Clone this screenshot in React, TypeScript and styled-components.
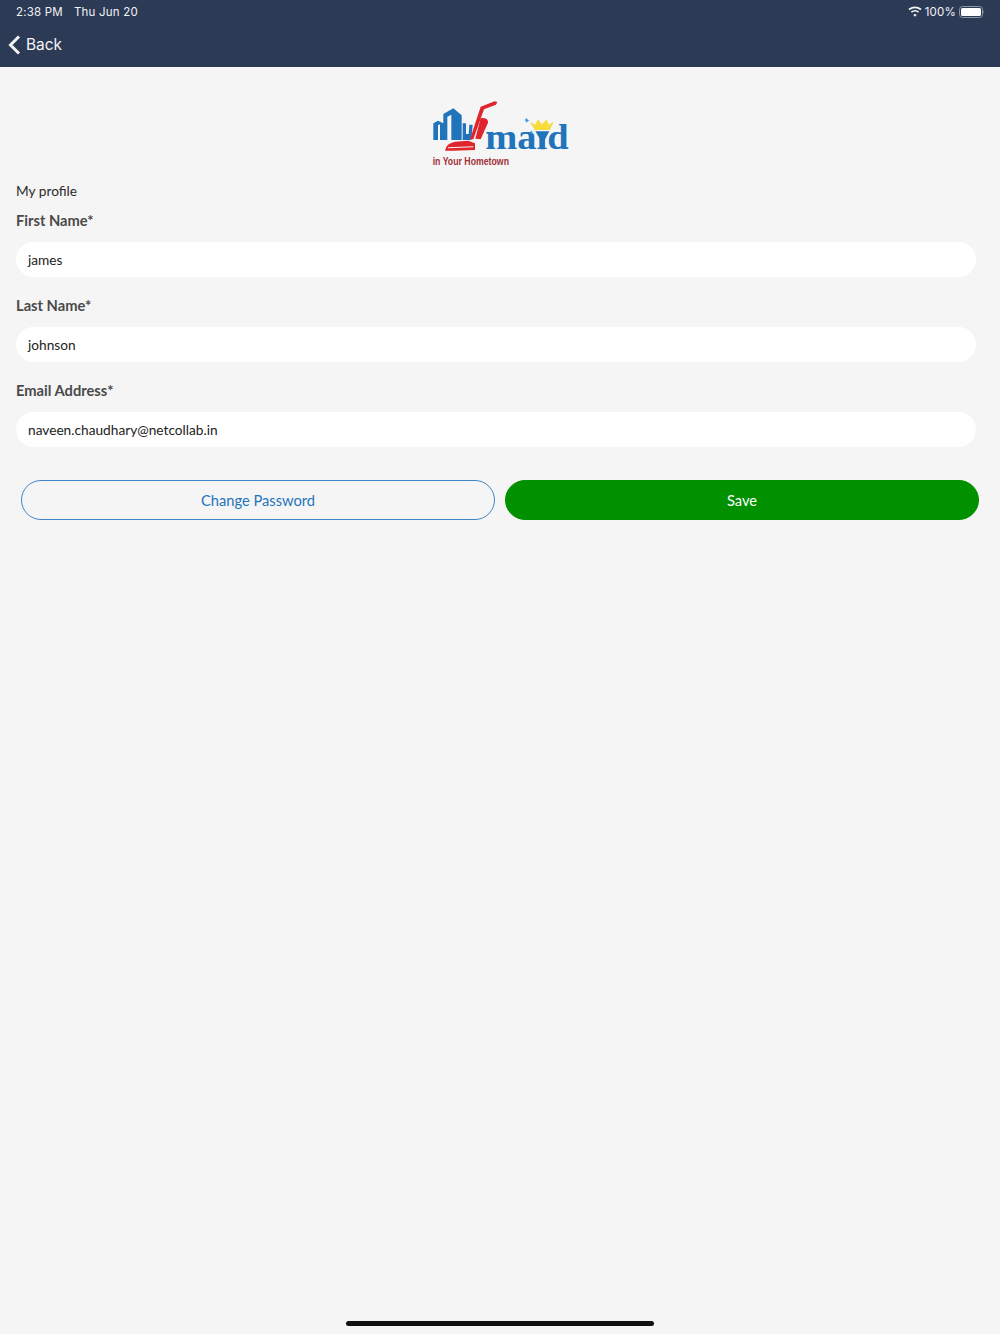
import styled, { createGlobalStyle } from "styled-components"

const GlobalStyle = createGlobalStyle`
  html, body {
    margin: 0;
    padding: 0;
    background: #f5f5f5;
    font-family: Lato, "Liberation Sans", sans-serif;
  }
`

const Page = styled.div`
  min-height: 100vh;
  display: flex;
  flex-direction: column;
  box-sizing: border-box;
`

const Header = styled.header`
  height: 67px;
  background: #2d3a55;
  color: #f2f3f5;
  box-sizing: border-box;
  padding: 0 15px 0 8px;
`

const StatusBar = styled.div`
  height: 23px;
  display: flex;
  align-items: center;
  justify-content: space-between;
  padding-left: 8px;
  font-family: Inter, "Liberation Sans", sans-serif;
  font-size: 11.5px;
  letter-spacing: 0.2px;
`

const StatusGroup = styled.div`
  display: flex;
  align-items: center;
  gap: ${(p: { $gap: number }) => p.$gap}px;
`

const BackLink = styled.div`
  display: flex;
  align-items: center;
  gap: 5px;
  height: 43px;
  font-family: Inter, "Liberation Sans", sans-serif;
  font-size: 15.4px;
`

const LogoWrap = styled.div`
  display: flex;
  justify-content: center;
  padding-top: 23px;
  height: 85px;
`

const Content = styled.main`
  padding: 0 24px 0 16px;
`

const Title = styled.div`
  font-size: 13.7px;
  line-height: 20px;
  color: #2b2b2b;
  margin-top: 6px;
`

const Field = styled.div`
  display: flex;
  flex-direction: column;
  margin-top: ${(p: { $top: number }) => p.$top}px;
`

const Label = styled.label`
  font-size: 14.7px;
  font-weight: 700;
  line-height: 20px;
  color: #4a4a4a;
`

const Input = styled.div`
  height: 35px;
  margin-top: 12px;
  padding: 0 12px;
  display: flex;
  align-items: center;
  background: #fff;
  border-radius: 18px;
  font-size: 13.7px;
  color: #222;
`

const Buttons = styled.div`
  display: flex;
  gap: 10px;
  margin: 33px -3px 0 5px;
`

const Button = styled.button<{ $primary?: boolean }>`
  flex: 1;
  height: 40px;
  box-sizing: border-box;
  border-radius: 21px;
  font-family: inherit;
  font-size: 14.7px;
  padding: 0;
  color: ${(p) => (p.$primary ? "#fff" : "#1f74bb")};
  background: ${(p) => (p.$primary ? "#009000" : "transparent")};
  border: 1px solid ${(p) => (p.$primary ? "#009000" : "#3f86c6")};
`

const HomeIndicator = styled.div`
  width: 308px;
  height: 5px;
  background: #111;
  border-radius: 3px;
  margin: auto auto 8px;
`

const Logo = () => (
  <svg width="180" height="85" viewBox="0 0 540 255">
    {/* towers */}
    <path d="M70 100 L84 92 L100 100 L100 72 L130 55 L155 76 L155 150 L70 150 Z" fill="#1f74bb" />
    <path d="M84 106 L90 103 L90 150 L84 150 Z M112 80 L124 74 L124 150 L112 150 Z" fill="#f5f5f5" />
    <path d="M158 100 L168 100 L168 132 L176 132 L178 104 L188 104 L184 150 L158 150 Z" fill="#1f74bb" />
    {/* vacuum */}
    <path d="M262 36 L258 44 L222 58 L190 148 L180 148 L212 50 L254 34 Z" fill="#e0262c" />
    <path d="M212 84 Q236 82 234 98 L212 148 L196 146 Z" fill="#e0262c" />
    <path d="M105 182 Q108 160 135 155 L175 152 L195 160 L195 180 L130 182 Z" fill="#e0262c" />
    <path d="M114 172 L190 169 L190 172 L114 175 Z" fill="#f5f5f5" />
    {/* wordmark */}
    <text
      x="226"
      y="177"
      fontFamily="'Liberation Serif', serif"
      fontWeight="700"
      fontSize="106"
      fill="#1f74bb"
      textLength="250"
      lengthAdjust="spacingAndGlyphs"
    >
      maıd
    </text>
    <path d="M360 95 L376 104 L384 88 L396 103 L410 88 L416 104 L431 95 L420 120 L374 120 Z" fill="#f7dc3c" />
    <path d="M376 124 L418 124 L404 150 L404 178 L392 178 L392 150 Z" fill="#1f74bb" />
    <path d="M350 84 L354 90 L358 92 L352 95 L349 98 L347 93 L344 90 Z M364 122 L368 126 L364 132 L360 126 Z" fill="#3f9fdc" />
    <text
      x="68"
      y="225"
      fontFamily="'Liberation Sans', sans-serif"
      fontWeight="700"
      fontSize="33"
      fill="#a2303a"
      textLength="229"
      lengthAdjust="spacingAndGlyphs"
    >
      in Your Hometown
    </text>
  </svg>
)

const App = () => (
  <Page>
    <GlobalStyle />
    <Header>
      <StatusBar>
        <StatusGroup $gap={11}>
          <span>2:38 PM</span>
          <span>Thu Jun 20</span>
        </StatusGroup>
        <StatusGroup $gap={3}>
          <svg width="14" height="11" viewBox="0 0 15 11">
            <path d="M7.5 8 L9.3 9.3 L7.5 11 L5.7 9.3 Z" fill="#f2f3f5" />
            <path d="M3.6 6.2 Q7.5 3.2 11.4 6.2" stroke="#f2f3f5" strokeWidth="1.8" fill="none" />
            <path d="M1 3.4 Q7.5 -1.4 14 3.4" stroke="#f2f3f5" strokeWidth="1.8" fill="none" />
          </svg>
          <span>100%</span>
          <svg width="26" height="12" viewBox="0 0 26 12">
            <rect x="0.5" y="0.5" width="23" height="11" rx="3" fill="none" stroke="#8e95a5" />
            <rect x="2" y="2" width="20" height="8" rx="1.6" fill="#fff" />
            <path d="M24.5 4 Q26 6 24.5 8 Z" fill="#8e95a5" />
          </svg>
        </StatusGroup>
      </StatusBar>
      <BackLink>
        <svg width="13" height="20" viewBox="0 0 13 20">
          <path d="M11 1.5 L2.5 10 L11 18.5" stroke="#f2f3f5" strokeWidth="3" fill="none" />
        </svg>
        <span>Back</span>
      </BackLink>
    </Header>
    <LogoWrap>
      <Logo />
    </LogoWrap>
    <Content>
      <Title>My profile</Title>
      <Field $top={9}>
        <Label>First Name*</Label>
        <Input>james</Input>
      </Field>
      <Field $top={18}>
        <Label>Last Name*</Label>
        <Input>johnson</Input>
      </Field>
      <Field $top={18}>
        <Label>Email Address*</Label>
        <Input>naveen.chaudhary@netcollab.in</Input>
      </Field>
      <Buttons>
        <Button>Change Password</Button>
        <Button $primary>Save</Button>
      </Buttons>
    </Content>
    <HomeIndicator />
  </Page>
)

export default App
